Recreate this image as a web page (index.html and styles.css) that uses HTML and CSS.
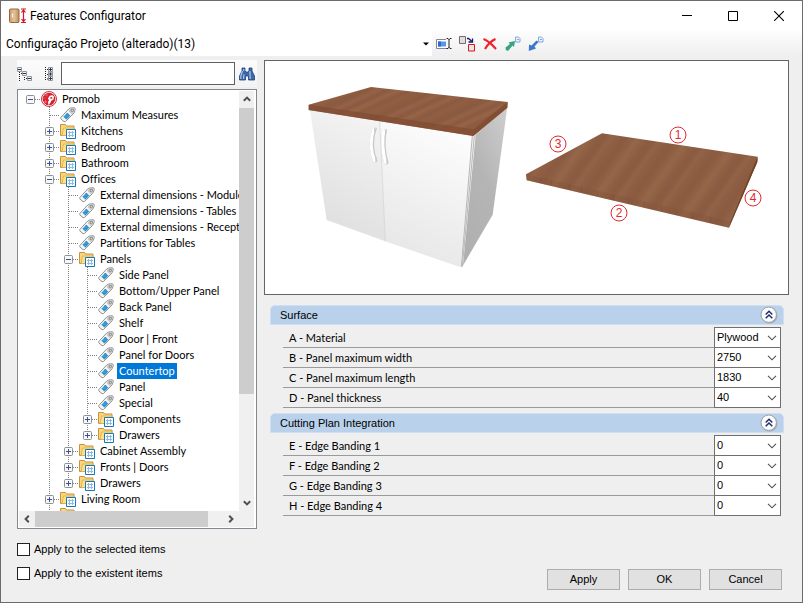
FILE: index.html
```html
<!DOCTYPE html>
<html lang="en">
<head>
<meta charset="utf-8">
<title>Features Configurator</title>
<link rel="stylesheet" href="styles.css">
</head>
<body>
<svg class="defs" aria-hidden="true">
  <symbol id="tag" viewBox="0 0 16 16">
    <path d="M.8 10.500 8.500 2.200 10.500 1 14.500.8 15.300 2 14.500 5 13 7 5.500 14.600 4 14.600.8 11.800z" fill="#f6f6f6" stroke="#8e8e8e"/>
    <path d="M10 2 14 1.500 14.300 2.500 13.500 5.500 11.800 7.200 8.500 4z" fill="#c8c8c8"/>
    <path d="M11.300 2.300h2v2h-2z" fill="#fff" stroke="#777" stroke-width=".8"/>
    <path d="M3.600 9.900 7.500 5.800 10.200 8.400 6.300 12.400z" fill="#2f9ad6"/>
    <path d="M3.800 9.800 7.300 6M6.300 12.200 10 8.500" stroke="#1669a5" stroke-dasharray="1 1" stroke-width=".8"/>
  </symbol>
  <symbol id="folder" viewBox="0 0 16 16">
    <path d="M.5 12.500V1.500h5l1 1.500h7.500v9.500z" fill="#f9d77c" stroke="#c9923a"/>
    <path d="M2 12.500 3.500 5H14v7.500z" fill="#ffe08a" stroke="#dba850" stroke-width=".8"/>
    <path d="M6.500 6.500h9v9h-9z" fill="#fff" stroke="#1479b8"/>
    <path d="M8 9.500h6M8 12.500h6M9.500 8v6M12.500 8v6" stroke="#8fb9e6"/>
  </symbol>
  <symbol id="promob" viewBox="0 0 16 16">
    <circle cx="8" cy="8" r="7.500" fill="#fff" stroke="#c9303a"/>
    <circle cx="8" cy="8" r="6.300" fill="#d8212f"/>
    <path d="M7.500 14.300 7 11 8 9.500 7 7.500 8.500 5 11 4 13 5.500 12.500 8.500 10.500 9.500 9.500 11.500z" fill="#fff"/>
    <path d="M9.300 6.200h2v1.500h-2z" fill="#d8212f"/>
    <path d="M3 4h3M2.500 7h2M3 11h3M6 2.500v3M4.500 9v3" stroke="#ef7d85" stroke-width=".7"/>
  </symbol>
  <symbol id="plus" viewBox="0 0 9 9">
    <rect x=".5" y=".5" width="8" height="8" rx="1" fill="#f7f7f7" stroke="#8f8f8f"/>
    <path d="M2 4.500h5M4.500 2v5" stroke="#3a4fa0"/>
  </symbol>
  <symbol id="minus" viewBox="0 0 9 9">
    <rect x=".5" y=".5" width="8" height="8" rx="1" fill="#f7f7f7" stroke="#8f8f8f"/>
    <path d="M2 4.500h5" stroke="#3a4fa0"/>
  </symbol>
  <symbol id="chev" viewBox="0 0 10 6">
    <path d="M1 .8 5 4.800 9 .8" fill="none" stroke="#505050" stroke-width="1.100"/>
  </symbol>
  <symbol id="arrow" viewBox="0 0 8 6">
    <path d="M.8 4.800 4 1.600 7.200 4.800" fill="none" stroke="#505050" stroke-width="2"/>
  </symbol>
  <symbol id="collapse" viewBox="0 0 18 18">
    <circle cx="9.500" cy="9.500" r="8" fill="#8a93a8" opacity=".6"/>
    <circle cx="8.700" cy="8.700" r="7.700" fill="#fcfcfc" stroke="#9a9ea8"/>
    <path d="M5.700 8.500 9 5.200 12.300 8.500M5.700 12.300 9 9 12.300 12.300" fill="none" stroke="#1f2f6e" stroke-width="1.500"/>
  </symbol>
</svg>

<main class="window">
  <header class="titlebar">
    <svg class="app-icon" viewBox="0 0 18 16">
      <defs><linearGradient id="door"><stop offset="0" stop-color="#c79b6c"/><stop offset=".5" stop-color="#e3c298"/><stop offset="1" stop-color="#b98e60"/></linearGradient></defs>
      <rect x=".5" y="1" width="9.500" height="13.500" rx="1" fill="url(#door)" stroke="#94683c"/>
      <path d="M3.500 5.500v4" stroke="#f5f5f5" stroke-width="1.300"/>
      <path d="M12 1h5M12 14.500h5M14.500 2v12M12.500 4.500l2-2.500 2 2.500M12.500 11l2 2.500 2-2.500" fill="none" stroke="#d8152c" stroke-width="1.200"/>
    </svg>
    <h1>Features Configurator</h1>
    <div class="caption-buttons">
      <button aria-label="Minimize"><svg viewBox="0 0 10 10"><path d="M0 4.500h10" stroke="#000"/></svg></button>
      <button aria-label="Maximize"><svg viewBox="0 0 10 10"><path d="M.5.500h9v9h-9z" fill="none" stroke="#000"/></svg></button>
      <button aria-label="Close"><svg viewBox="0 0 10 10"><path d="M0 0 10 10M10 0 0 10" stroke="#000" stroke-width="1.100"/></svg></button>
    </div>
  </header>

  <div class="toolbar">
    <div class="project">
      <select aria-label="Configuration"><option>Configuração Projeto (alterado)(13)</option></select>
      <svg class="drop" viewBox="0 0 6 4"><path d="M0 .5h6L3 3.500z"/></svg>
    </div>
    <div class="tools">
      <button aria-label="Rename"><svg viewBox="0 0 16 16">
        <path d="M10 3.500H.5v9H12" fill="#fff" stroke="#7d8798"/><path d="M2 5.500h8v5H2z" fill="#5b92ea"/><path d="M2 5.500h3v5H2z" fill="#2f6ad4"/>
        <path d="M10.500 2.500h1.500l1 1 1-1h1.500M13 3v9M10.500 12.500h1.500l1-1 1 1h1.500" fill="none" stroke="#222"/></svg></button>
      <button aria-label="Duplicate"><svg viewBox="0 0 16 16">
        <path d="M.5.500h6v7h-6z" fill="#ddd" stroke="#7a6a6a"/><path d="M9.500 8.500h6v6.500h-6z" fill="#e5e5e5" stroke="#e01515"/>
        <path d="M8 2.500h1.500l3 2.500M13.500 2.500v3.500h-4" fill="none" stroke="#17176e" stroke-width="1.300"/></svg></button>
      <button aria-label="Delete"><svg viewBox="0 0 16 16">
        <path d="M1.500 3Q7 5 14 13M13.500 3Q7 6 3 13" fill="none" stroke="#f0202a" stroke-width="2.200"/></svg></button>
      <button aria-label="Export"><svg viewBox="0 0 16 16">
        <path d="M10.500 1h3l1.500 1.500V6h-4.500z" fill="#eaf2fd" stroke="#86a9dc"/><path d="M12 3.500h2" stroke="#86a9dc"/>
        <path d="M.5 11.500 5 8 3.500 6.500 10 5 9 11 7.500 9.500 3 15 .8 14z" fill="#35a37c"/></svg></button>
      <button aria-label="Import"><svg viewBox="0 0 16 16">
        <path d="M10.500 1h3l1.500 1.500V6h-4.500z" fill="#eaf2fd" stroke="#86a9dc"/><path d="M12 3.500h2" stroke="#86a9dc"/>
        <path d="M10.500 6 6.500 10.500 8 12.500.8 15 1 8.500 3.500 9.500 8.500 4.500z" fill="#3c78cc"/></svg></button>
    </div>
  </div>

  <div class="content">
    <section class="side">
      <div class="search">
        <button aria-label="Collapse all"><svg viewBox="0 0 16 16">
          <path d="M2.500 6v9M4 7.500h3M7.500 11v4M9 12.500h2" fill="none" stroke="#222" stroke-dasharray="1 1"/>
          <path d="M.5 1.500h4v4h-4zM5.500 5.500h4v4h-4zM10.500 10.500h4v4h-4z" fill="#f4f4f4" stroke="#8c97a5"/><path d="M1 3.500h3M6 7.500h3M11 12.500h3" stroke="#333"/></svg></button>
        <button aria-label="Expand all"><svg viewBox="0 0 16 16">
          <path d="M4.500 1v14M6 3.500h2M6 8.500h2M6 13h2" fill="none" stroke="#222" stroke-dasharray="1 1"/>
          <path d="M7.500 1.500h4v4h-4zM7.500 6h4v4h-4zM7.500 10.500h4v4h-4z" fill="#f4f4f4" stroke="#8c97a5"/><path d="M8 3.500h3M8 8h3M8 12.500h3M9.500 2v3M9.500 6.500v3M9.500 11v3" stroke="#333"/></svg></button>
        <input type="text" aria-label="Search">
        <button aria-label="Find"><svg viewBox="0 0 16 16">
          <path d="M3 2h3v3l1 1h2l1-1V2h3v3l2.500 5v4H9.500v-4h-3v4H.5v-4L3 5z" fill="#3f68a8" stroke="#1e4380" stroke-width=".8"/>
          <path d="M3.500 5 1.800 10v3M11 5v3l.2 5M4.700 3v2M5 8.500 4.500 13" fill="none" stroke="#b9d0f2" stroke-width="1.100"/></svg></button>
      </div>

      <nav class="tree" aria-label="Features">
        <div class="view">
          <ul class="root">
            <li><div class="row"><button class="exp" aria-label="Collapse"><svg><use href="#minus"/></svg></button><svg class="ico"><use href="#promob"/></svg><span>Promob</span></div>
              <ul>
                <li><div class="row"><i></i><svg class="ico"><use href="#tag"/></svg><span>Maximum Measures</span></div></li>
                <li><div class="row"><button class="exp" aria-label="Expand"><svg><use href="#plus"/></svg></button><svg class="ico"><use href="#folder"/></svg><span>Kitchens</span></div></li>
                <li><div class="row"><button class="exp" aria-label="Expand"><svg><use href="#plus"/></svg></button><svg class="ico"><use href="#folder"/></svg><span>Bedroom</span></div></li>
                <li><div class="row"><button class="exp" aria-label="Expand"><svg><use href="#plus"/></svg></button><svg class="ico"><use href="#folder"/></svg><span>Bathroom</span></div></li>
                <li><div class="row"><button class="exp" aria-label="Collapse"><svg><use href="#minus"/></svg></button><svg class="ico"><use href="#folder"/></svg><span>Offices</span></div>
                  <ul>
                    <li><div class="row"><i></i><svg class="ico"><use href="#tag"/></svg><span>External dimensions - Modules</span></div></li>
                    <li><div class="row"><i></i><svg class="ico"><use href="#tag"/></svg><span>External dimensions - Tables</span></div></li>
                    <li><div class="row"><i></i><svg class="ico"><use href="#tag"/></svg><span>External dimensions - Reception</span></div></li>
                    <li><div class="row"><i></i><svg class="ico"><use href="#tag"/></svg><span>Partitions for Tables</span></div></li>
                    <li><div class="row"><button class="exp" aria-label="Collapse"><svg><use href="#minus"/></svg></button><svg class="ico"><use href="#folder"/></svg><span>Panels</span></div>
                      <ul>
                        <li><div class="row"><i></i><svg class="ico"><use href="#tag"/></svg><span>Side Panel</span></div></li>
                        <li><div class="row"><i></i><svg class="ico"><use href="#tag"/></svg><span>Bottom/Upper Panel</span></div></li>
                        <li><div class="row"><i></i><svg class="ico"><use href="#tag"/></svg><span>Back Panel</span></div></li>
                        <li><div class="row"><i></i><svg class="ico"><use href="#tag"/></svg><span>Shelf</span></div></li>
                        <li><div class="row"><i></i><svg class="ico"><use href="#tag"/></svg><span>Door | Front</span></div></li>
                        <li><div class="row"><i></i><svg class="ico"><use href="#tag"/></svg><span>Panel for Doors</span></div></li>
                        <li><div class="row"><i></i><svg class="ico"><use href="#tag"/></svg><span class="selected">Countertop</span></div></li>
                        <li><div class="row"><i></i><svg class="ico"><use href="#tag"/></svg><span>Panel</span></div></li>
                        <li><div class="row"><i></i><svg class="ico"><use href="#tag"/></svg><span>Special</span></div></li>
                        <li><div class="row"><button class="exp" aria-label="Expand"><svg><use href="#plus"/></svg></button><svg class="ico"><use href="#folder"/></svg><span>Components</span></div></li>
                        <li><div class="row"><button class="exp" aria-label="Expand"><svg><use href="#plus"/></svg></button><svg class="ico"><use href="#folder"/></svg><span>Drawers</span></div></li>
                      </ul>
                    </li>
                    <li><div class="row"><button class="exp" aria-label="Expand"><svg><use href="#plus"/></svg></button><svg class="ico"><use href="#folder"/></svg><span>Cabinet Assembly</span></div></li>
                    <li><div class="row"><button class="exp" aria-label="Expand"><svg><use href="#plus"/></svg></button><svg class="ico"><use href="#folder"/></svg><span>Fronts | Doors</span></div></li>
                    <li><div class="row"><button class="exp" aria-label="Expand"><svg><use href="#plus"/></svg></button><svg class="ico"><use href="#folder"/></svg><span>Drawers</span></div></li>
                  </ul>
                </li>
                <li><div class="row"><button class="exp" aria-label="Expand"><svg><use href="#plus"/></svg></button><svg class="ico"><use href="#folder"/></svg><span>Living Room</span></div></li>
                <li><div class="row"><i></i><svg class="ico"><use href="#folder"/></svg></div></li>
              </ul>
            </li>
          </ul>
        </div>
        <div class="vbar">
          <svg class="up"><use href="#arrow"/></svg>
          <div class="vtrack"><div class="vthumb"></div></div>
          <svg class="down"><use href="#arrow"/></svg>
        </div>
        <div class="hbar">
          <svg class="left"><use href="#arrow"/></svg>
          <div class="htrack"><div class="hthumb"></div></div>
          <svg class="right"><use href="#arrow"/></svg>
        </div>
      </nav>
    </section>

    <section class="details">
      <svg class="scene" viewBox="0 0 523 233" role="img" aria-label="Cabinet and countertop">
        <defs>
          <linearGradient id="wood" gradientUnits="userSpaceOnUse" x1="300" y1="100" x2="337" y2="180" spreadMethod="repeat">
            <stop offset="0" stop-color="#8a5a3e"/><stop offset=".15" stop-color="#93624a"/><stop offset=".3" stop-color="#8b593f"/><stop offset=".45" stop-color="#966447"/><stop offset=".6" stop-color="#8c5a40"/><stop offset=".75" stop-color="#905e43"/><stop offset="1" stop-color="#8a5a3e"/>
          </linearGradient>
          <linearGradient id="wood2" gradientUnits="userSpaceOnUse" x1="300" y1="300" x2="400" y2="372" spreadMethod="repeat">
            <stop offset="0" stop-color="#8b5b40"/><stop offset=".12" stop-color="#8f5f45"/><stop offset=".25" stop-color="#956748"/><stop offset=".4" stop-color="#8f5f44"/><stop offset=".55" stop-color="#8a5a41"/><stop offset=".7" stop-color="#926346"/><stop offset=".85" stop-color="#8d5d44"/><stop offset="1" stop-color="#8b5b40"/>
          </linearGradient>
          <linearGradient id="doorL" x1=".7" y1="0" x2=".4" y2="1"><stop offset="0" stop-color="#f4f4f5"/><stop offset="1" stop-color="#dededf"/></linearGradient>
          <linearGradient id="doorR" x1=".7" y1="0" x2=".4" y2="1"><stop offset="0" stop-color="#fdfdfd"/><stop offset="1" stop-color="#e6e6e7"/></linearGradient>
          <linearGradient id="sideP" x1=".9" y1="0" x2=".3" y2="1"><stop offset="0" stop-color="#cdcdcd"/><stop offset=".5" stop-color="#b5b5b5"/><stop offset="1" stop-color="#b0b0b0"/></linearGradient>
        </defs>
        <g transform="translate(-5 -1) scale(.33333)">
          <path d="M150 150 359 184 376 544 200 480z" fill="url(#doorL)"/>
          <path d="M359 184 638 226 602 622 376 544z" fill="url(#doorR)"/>
          <path d="M359 184 376 544" stroke="#cfcfcf" stroke-width="2"/>
          <path d="M645 226 742 140 698 464 608 618z" fill="url(#sideP)"/>
          <path d="M635 226H647L609 619 602 622z" fill="#f3f3f3"/>
          <path d="M637 228 604 620M643 228 607 620" stroke="#999" stroke-width="2"/>
          <path d="M333 81 743 126 742 143 640 228 146 150 146 134z" fill="url(#wood)"/>
          <path d="M146 134 640 208V228L146 150z" fill="#80492f" opacity=".65"/>
          <path d="M640 208 743 126 742 143 640 228z" fill="#7d472d" opacity=".7"/>
          <path d="M345 202Q325 255 347 306M374 208Q364 260 380 312" fill="none" stroke="#c9c9ca" stroke-width="13"/>
          <path d="M343 202Q323 255 345 306M372 208Q362 260 378 312" fill="none" stroke="#fff" stroke-width="9"/>
          <path d="M348 292v14M381 298v15M344 203v12M377 208v14" stroke="#cacacb" stroke-width="4"/>
        </g>
        <g transform="translate(245 -1) scale(.33333)">
          <path d="M276 220 743 290 742 306 657 503 50 361 48 343z" fill="url(#wood2)"/>
          <path d="M48 343 662 484 657 503 50 361z" fill="#805037" opacity=".25"/>
          <path d="M743 290 742 306 657 503 662 484z" fill="#714126"/>
          <path d="M92 354v14M125 362v15M178 374v15M215 382v16M262 394v16M310 404v17M354 414v16M402 426v16M455 438v17M500 448v17M548 459v17M602 471v17" stroke="#734631" stroke-width="3" opacity=".35"/>
        </g>
        <g class="marks" transform="translate(0 1)">
          <circle cx="413" cy="73" r="8"/><text x="413" y="77">1</text>
          <circle cx="354" cy="151" r="8"/><text x="354" y="155">2</text>
          <circle cx="293" cy="82" r="8"/><text x="293" y="86">3</text>
          <circle cx="488" cy="136" r="8"/><text x="488" y="140">4</text>
        </g>
      </svg>

      <section class="group">
        <header><h2>Surface</h2><button aria-label="Collapse Surface"><svg><use href="#collapse"/></svg></button></header>
        <div class="fields">
          <div class="field"><label for="a">A - Material</label><div class="pick"><select id="a"><option>Plywood</option></select><svg><use href="#chev"/></svg></div></div>
          <div class="field"><label for="b">B - Panel maximum width</label><div class="pick"><select id="b"><option>2750</option></select><svg><use href="#chev"/></svg></div></div>
          <div class="field"><label for="c">C - Panel maximum length</label><div class="pick"><select id="c"><option>1830</option></select><svg><use href="#chev"/></svg></div></div>
          <div class="field"><label for="d">D - Panel thickness</label><div class="pick"><select id="d"><option>40</option></select><svg><use href="#chev"/></svg></div></div>
        </div>
      </section>
      <section class="group">
        <header><h2>Cutting Plan Integration</h2><button aria-label="Collapse Cutting Plan Integration"><svg><use href="#collapse"/></svg></button></header>
        <div class="fields">
          <div class="field"><label for="e">E - Edge Banding 1</label><div class="pick"><select id="e"><option>0</option></select><svg><use href="#chev"/></svg></div></div>
          <div class="field"><label for="f">F - Edge Banding 2</label><div class="pick"><select id="f"><option>0</option></select><svg><use href="#chev"/></svg></div></div>
          <div class="field"><label for="g">G - Edge Banding 3</label><div class="pick"><select id="g"><option>0</option></select><svg><use href="#chev"/></svg></div></div>
          <div class="field"><label for="h">H - Edge Banding 4</label><div class="pick"><select id="h"><option>0</option></select><svg><use href="#chev"/></svg></div></div>
        </div>
      </section>
    </section>
  </div>

  <footer class="footer">
    <div class="checks">
      <label><input type="checkbox">Apply to the selected items</label>
      <label><input type="checkbox">Apply to the existent items</label>
    </div>
    <div class="actions">
      <button>Apply</button>
      <button>OK</button>
      <button>Cancel</button>
    </div>
  </footer>
</main>
</body>
</html>
```
FILE: styles.css
```css
* { box-sizing: border-box; }

body {
  margin: 0;
  background: #fff;
  color: #000;
  font: 11px/16px "Liberation Sans", sans-serif;
}

button, input, select { font: inherit; color: inherit; margin: 0; }
button { padding: 0; border: 0; background: none; }
h1, h2 { margin: 0; font: inherit; }
ul { margin: 0; padding: 0; list-style: none; }
svg { display: block; flex: none; }
.defs { display: none; }

.window {
  display: flex;
  flex-direction: column;
  height: calc(100vh - 10px);
  margin: 0 9px 10px 0;
  border: 1px solid #6b6b6d;
  background: #efefef;
}

/* Title bar */
.titlebar {
  display: flex;
  align-items: center;
  height: 30px;
  padding-left: 8px;
  background: #fff;
  font: 12px/16px Roboto, sans-serif;
}
.app-icon { width: 18px; height: 16px; margin-right: 3px; }
.caption-buttons { display: flex; margin-left: auto; }
.caption-buttons button { width: 46px; height: 28px; display: grid; place-items: center; }
.caption-buttons svg { width: 10px; height: 10px; }

/* Toolbar */
.toolbar {
  display: flex;
  height: 25px;
  background: linear-gradient(#fdfdfd, #efefef);
}
.project {
  display: grid;
  grid-template-columns: 1fr 12px;
  align-items: center;
  width: 431px;
  background: #fff;
  font: 12px/16px Roboto, sans-serif;
}
.project select {
  appearance: none;
  grid-area: 1 / 1 / 2 / 3;
  height: 25px;
  padding: 0 5px;
  border: 0;
  background: none;
}
.drop { grid-area: 1 / 2; width: 6px; height: 4px; justify-self: center; }
.tools { display: flex; align-items: center; gap: 7px; padding-left: 4px; }
.tools svg { width: 16px; height: 16px; }

/* Main area */
.content {
  display: grid;
  grid-template-columns: 240px 1fr;
  gap: 7px;
  flex: 1;
  min-height: 0;
  padding: 4px 13px 0 16px;
}
.side { display: flex; flex-direction: column; min-height: 0; }

.search {
  display: flex;
  align-items: center;
  height: 27px;
  margin-bottom: 2px;
  background: linear-gradient(#fcfcfc, #f3f3f3);
}
.search button { padding: 0 4px; }
.search button:first-child { padding-left: 0; }
.search button:last-child { padding-right: 2px; }
.search svg { width: 16px; height: 16px; }
.search input {
  flex: 1;
  min-width: 0;
  height: 23px;
  border: 1px solid #606060;
  background: #fff;
}

/* Tree */
.tree {
  display: grid;
  grid-template: minmax(0, 1fr) 16px / minmax(0, 1fr) 15px;
  flex: 1;
  min-height: 0;
  padding: 1px 2px 1px 1px;
  border: 1px solid #828790;
  background: #fff;
}
.tree, .field label {
  font-family: Lato, sans-serif;
  font-variant-ligatures: none;
}
.view { overflow: hidden; min-height: 0; }
.tree li {
  --dots: repeating-linear-gradient(#808080 0 1px, transparent 1px 2px);
  background: var(--dots) 11px 0 / 1px 100% no-repeat;
}
.tree li:last-child { background-size: 1px 8px; }
.tree .root > li { background: none; }
.tree ul ul { margin-left: 19px; }
.row {
  display: flex;
  align-items: center;
  height: 16px;
  white-space: nowrap;
  background: repeating-linear-gradient(90deg, #808080 0 1px, transparent 1px 2px) 12px 8px / 9px 1px no-repeat;
}
.exp, .row i { flex: none; width: 22px; padding-left: 7px; }
.exp svg { width: 9px; height: 9px; }
.ico { width: 16px; height: 16px; margin-right: 3px; }
.row span { padding: 0 2px; }
.row .selected { background: #0078d7; color: #fff; }

.vbar, .hbar { display: flex; align-items: center; background: #f0f0f0; }
.vbar { flex-direction: column; }
.hbar { grid-column: 1 / 3; padding-right: 15px; }
.vbar svg, .hbar svg { width: 8px; height: 6px; margin: 5px 4px; }
.vtrack { flex: 1; width: 100%; padding-top: 1px; }
.vthumb { height: 74%; background: #cdcdcd; }
.htrack { flex: 1; height: 100%; }
.hthumb { width: 92%; height: 100%; background: #cdcdcd; }
.down { transform: rotate(180deg); }
.left { transform: rotate(-90deg); }
.right { transform: rotate(90deg); }

/* Preview and properties */
.scene { width: 100%; border: 1px solid #646464; background: #fff; }
.marks circle { fill: #fff; stroke: #e02a30; }
.marks text { fill: #e02a30; font: 12px "Liberation Sans", sans-serif; text-anchor: middle; }

.group { margin: 0 5px 0 6px; padding-top: 5px; }
.scene + .group { padding-top: 10px; }
.group header {
  display: flex;
  align-items: center;
  justify-content: space-between;
  height: 20px;
  padding: 0 5px 0 9px;
  border: 1px solid #cfdff1;
  border-radius: 5px 5px 0 0;
  background: #b9d1ea;
}
.group header svg { width: 18px; height: 18px; }
.fields { margin: 2px 3px 0 13px; }
.field {
  display: grid;
  grid-template-columns: 1fr 67px;
  height: 20px;
}
.field label {
  align-self: end;
  height: 20px;
  padding: 2px 6px 0;
  border-bottom: 1px solid #9a9a9a;
}
.pick {
  display: grid;
  grid-template-columns: 1fr 17px;
  align-items: center;
  border: solid #6f6f6f;
  border-width: 0 1px 1px;
  background: #fff;
}
.field:first-child { height: 21px; }
.field:first-child .pick { border-top-width: 1px; }
.pick select {
  appearance: none;
  grid-area: 1 / 1 / 2 / 3;
  min-width: 0;
  height: 18px;
  padding: 0 2px 2px;
  border: 0;
  background: none;
}
.pick svg { grid-area: 1 / 2; width: 10px; height: 6px; justify-self: center; }

/* Footer */
.footer {
  display: flex;
  justify-content: space-between;
  height: 73px;
  padding: 12px 20px 12px 16px;
}
.checks { display: flex; flex-direction: column; gap: 8px; }
.checks label { display: flex; align-items: center; gap: 4px; }
.checks input {
  appearance: none;
  width: 13px;
  height: 13px;
  border: 1px solid #222;
  background: #fff;
}
.actions { display: flex; align-items: flex-end; gap: 8px; }
.actions button {
  width: 73px;
  height: 21px;
  padding-bottom: 2px;
  border: 1px solid #adadad;
  background: #e1e1e1;
}
```
